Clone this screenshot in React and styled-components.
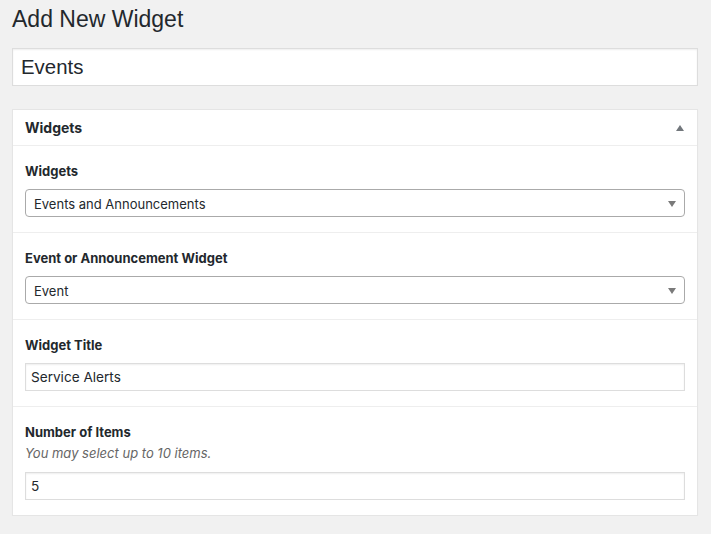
import styled, { createGlobalStyle } from 'styled-components';

const GlobalStyle = createGlobalStyle`
  html, body {
    margin: 0;
    padding: 0;
    background: #f1f1f1;
  }
  body {
    font-family: Inter, "Liberation Sans", Arial, sans-serif;
    color: #23282d;
  }
  * {
    box-sizing: border-box;
  }
`;

const Page = styled.div`
  padding: 0 13px 0 12px;
`;

const Heading = styled.h1`
  margin: 5px 0 0;
  font-family: "Liberation Sans", Arial, sans-serif;
  font-size: 23px;
  font-weight: 400;
  line-height: 29px;
  color: #23282d;
`;

const TitleInput = styled.input`
  display: block;
  width: 100%;
  height: 38px;
  margin-top: 14px;
  padding: 3px 8px;
  border: 1px solid #ddd;
  background: #fff;
  box-shadow: inset 0 1px 2px rgba(0, 0, 0, 0.07);
  font-family: "Liberation Sans", Arial, sans-serif;
  font-size: 20.4px;
  color: #23282d;
  outline: none;
`;

const Panel = styled.div`
  margin-top: 23px;
  background: #fff;
  border: 1px solid #e5e5e5;
  box-shadow: 0 1px 1px rgba(0, 0, 0, 0.04);
`;

const PanelHeader = styled.div`
  display: flex;
  align-items: center;
  justify-content: space-between;
  height: 36px;
  padding: 0 13px 0 12px;
  border-bottom: 1px solid #eee;

  h2 {
    margin: 0;
    font-size: 14px;
    font-weight: 700;
    line-height: 1;
  }
`;

const Toggle = styled.span`
  width: 0;
  height: 0;
  border-left: 4px solid transparent;
  border-right: 4px solid transparent;
  border-bottom: 6px solid #72777c;
`;

const Field = styled.div`
  padding: 16px 12px 15px;
  border-bottom: ${(p) => (p.$last ? 'none' : '1px solid #eee')};
`;

const Label = styled.label`
  display: block;
  font-size: 13px;
  font-weight: 700;
  line-height: 18px;
  margin-bottom: ${(p) => (p.$tight ? '2px' : '9px')};
`;

const Description = styled.p`
  margin: 0 0 9px;
  font-size: 13px;
  font-style: italic;
  line-height: 20px;
  color: #666;
`;

const SelectBox = styled.div`
  position: relative;
  display: flex;
  align-items: center;
  height: 28px;
  padding: 1px 28px 0 8px;
  border: 1px solid #aaa;
  border-radius: 4px;
  background: #fff;
  font-size: 13px;
  color: #23282d;
`;

const Caret = styled.span`
  position: absolute;
  right: 8px;
  top: 11px;
  width: 0;
  height: 0;
  border-left: 4px solid transparent;
  border-right: 4px solid transparent;
  border-top: 6px solid #7a7a7a;
`;

const TextInput = styled.input`
  display: block;
  width: 100%;
  height: 28px;
  padding: 0 5px;
  border: 1px solid #ddd;
  background: #fff;
  box-shadow: inset 0 1px 2px rgba(0, 0, 0, 0.07);
  font-family: inherit;
  font-size: 13.6px;
  color: #23282d;
  outline: none;
`;

function Select({ value }) {
  return (
    <SelectBox>
      {value}
      <Caret />
    </SelectBox>
  );
}

export default function App() {
  return (
    <>
      <GlobalStyle />
      <Page>
        <Heading>Add New Widget</Heading>
        <TitleInput defaultValue="Events" />
        <Panel>
          <PanelHeader>
            <h2>Widgets</h2>
            <Toggle />
          </PanelHeader>
          <Field>
            <Label>Widgets</Label>
            <Select value="Events and Announcements" />
          </Field>
          <Field>
            <Label>Event or Announcement Widget</Label>
            <Select value="Event" />
          </Field>
          <Field>
            <Label>Widget Title</Label>
            <TextInput defaultValue="Service Alerts" />
          </Field>
          <Field $last>
            <Label $tight>Number of Items</Label>
            <Description>You may select up to 10 items.</Description>
            <TextInput defaultValue="5" />
          </Field>
        </Panel>
      </Page>
    </>
  );
}
